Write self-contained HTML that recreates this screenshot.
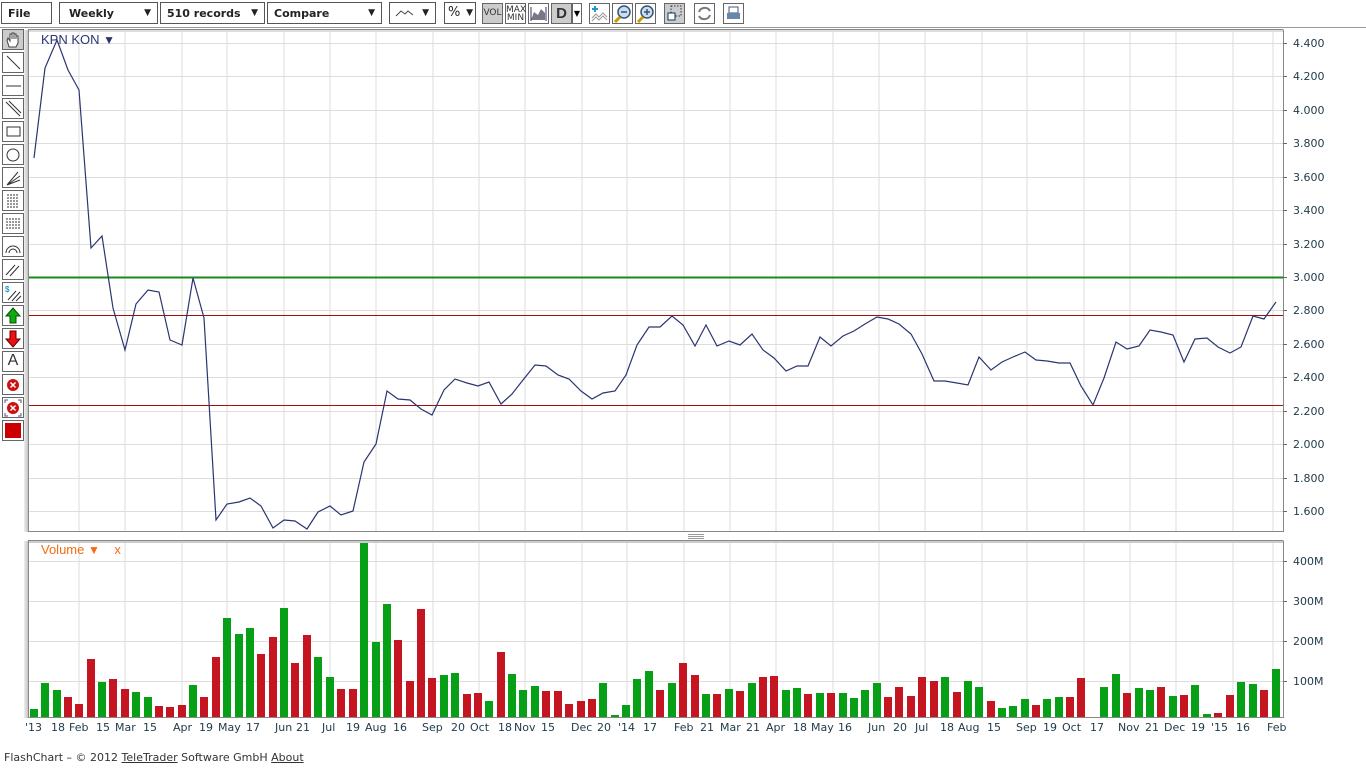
<!DOCTYPE html>
<html><head><meta charset="utf-8"><style>
*{margin:0;padding:0;box-sizing:border-box}
body{width:1366px;height:768px;background:#fff;font-family:"DejaVu Sans",sans-serif;position:relative;overflow:hidden}
.dd{position:absolute;top:2px;height:22px;border:1px solid #555;background:#fff;font:bold 11px "DejaVu Sans",sans-serif;color:#222;padding:4px 6px;}
.dd .a{position:absolute;right:6px;top:5px;font-size:9px}
.tb{position:absolute;top:3px;width:21px;height:21px;border:1px solid #666;background:#fff;font:9px "DejaVu Sans",sans-serif;text-align:center;line-height:19px;color:#333}
.lb{position:absolute;left:2px;width:22px;height:21px;border:1px solid #666;background:#fff;text-align:center}
.ax{position:absolute;left:1293px;font:11px "DejaVu Sans",sans-serif;color:#1e3a48}
.xl span{position:absolute;top:721px;font:11px "DejaVu Sans",sans-serif;color:#1e3a48;white-space:pre}
</style></head><body>
<div class="dd" style="left:1px;width:51px">File</div>
<div class="dd" style="left:59px;width:99px;padding-left:9px">Weekly<span class="a">▼</span></div>
<div class="dd" style="left:160px;width:105px">510 records<span class="a">▼</span></div>
<div class="dd" style="left:267px;width:115px">Compare<span class="a">▼</span></div>
<div class="dd" style="left:389px;width:47px"><svg width="20" height="10" style="position:absolute;left:5px;top:5px"><path d="M1 8 L6 3 L10 6 L13 3 L18 7" fill="none" stroke="#444"/></svg><span class="a">▼</span></div>
<div class="dd" style="left:444px;width:32px;font-weight:normal;font-size:13px;padding:2px 3px">%<span class="a" style="right:2px">▼</span></div>
<div class="tb" style="left:482px;background:#ccc">VOL</div>
<div class="tb" style="left:505px;line-height:8px;padding-top:2px">MAX<br>MIN</div>
<div class="tb" style="left:528px"><svg width="19" height="19"><path d="M2 16 L5 8 L9 11 L12 5 L16 9 L16 16Z" fill="#778"/><path d="M2 3V17M17 3V17" stroke="#336"/></svg></div>
<div class="tb" style="left:551px;background:#ccc;font:bold 15px sans-serif;line-height:19px">D</div>
<div style="position:absolute;left:572px;top:3px;width:10px;height:21px;border:1px solid #666;font-size:8px;line-height:19px;text-align:center">▼</div>
<div class="tb" style="left:589px"><svg width="19" height="19"><path d="M5 2v6M2 5h6" stroke="#29c" stroke-width="2"/><path d="M2 14L6 10L9 13L13 9L17 13M2 17L6 13L9 16L13 12L17 16" fill="none" stroke="#999"/></svg></div>
<div class="tb" style="left:612px"><svg width="19" height="19"><circle cx="11" cy="8" r="6" fill="#cde" stroke="#357" stroke-width="1.5"/><path d="M7 13L2 18" stroke="#c90" stroke-width="3"/><path d="M8 8h6" stroke="#357" stroke-width="1.5"/></svg></div>
<div class="tb" style="left:635px"><svg width="19" height="19"><circle cx="11" cy="8" r="6" fill="#cde" stroke="#357" stroke-width="1.5"/><path d="M7 13L2 18" stroke="#c90" stroke-width="3"/><path d="M8 8h6M11 5v6" stroke="#357" stroke-width="1.5"/></svg></div>
<div class="tb" style="left:664px;background:#ccc"><svg width="19" height="19"><rect x="6" y="2" width="10" height="10" fill="none" stroke="#333" stroke-dasharray="1.5 1.5"/><rect x="3" y="9" width="7" height="7" fill="#fff" stroke="#135"/></svg></div>
<div class="tb" style="left:694px"><svg width="19" height="19"><path d="M4 8 A6 6 0 0 1 15 7 M15 11 A6 6 0 0 1 4 12" fill="none" stroke="#778" stroke-width="2"/></svg></div>
<div class="tb" style="left:723px"><svg width="19" height="19"><rect x="5" y="3" width="9" height="6" fill="#fff" stroke="#457"/><rect x="3" y="9" width="13" height="6" fill="#68a"/></svg></div>
<div style="position:absolute;left:0;top:27px;width:1366px;height:1px;background:#999"></div>

<!-- left toolbar -->
<div class="lb" style="top:29px;background:#ccc"><svg width="20" height="19"><path d="M6 17 L4 10 L5 8 L7 11 L7 4 L9 4 L9 9 L9 3 L11 3 L11 9 L11 4 L13 4 L13 9 L13 6 L15 6 L15 13 L13 17Z" fill="#fff" stroke="#444"/></svg></div>
<div class="lb" style="top:52px"><svg width="20" height="19"><path d="M4 3L17 16" stroke="#333"/></svg></div>
<div class="lb" style="top:75px"><svg width="20" height="19"><path d="M3 10H18" stroke="#333"/></svg></div>
<div class="lb" style="top:98px"><svg width="20" height="19"><path d="M3 3L17 17M6 2L18 14" stroke="#333"/></svg></div>
<div class="lb" style="top:121px"><svg width="20" height="19"><rect x="4" y="5" width="13" height="9" fill="none" stroke="#333"/></svg></div>
<div class="lb" style="top:144px"><svg width="20" height="19"><circle cx="10" cy="10" r="6" fill="none" stroke="#333"/></svg></div>
<div class="lb" style="top:167px"><svg width="20" height="19"><path d="M4 17L15 4M4 17L17 8M4 17L17 12" stroke="#333"/></svg></div>
<div class="lb" style="top:190px"><svg width="20" height="19"><path d="M5 3V17M8 3V17M11 3V17M14 3V17" stroke="#333" stroke-dasharray="2 1"/></svg></div>
<div class="lb" style="top:213px"><svg width="20" height="19"><path d="M3 5H17M3 8H17M3 11H17M3 14H17" stroke="#333" stroke-dasharray="2 1"/></svg></div>
<div class="lb" style="top:236px"><svg width="20" height="19"><path d="M3 16A7 7 0 0 1 17 16M6 16A4 4 0 0 1 14 16" fill="none" stroke="#333"/></svg></div>
<div class="lb" style="top:259px"><svg width="20" height="19"><path d="M3 15L12 5M7 16L16 6" stroke="#333"/></svg></div>
<div class="lb" style="top:282px"><svg width="20" height="19"><text x="2" y="9" font-size="8" font-weight="bold" fill="#29c" font-family="Liberation Sans">$</text><path d="M5 17L13 8M9 18L17 9M13 18L18 13" stroke="#333"/></svg></div>
<div class="lb" style="top:305px"><svg width="20" height="19"><path d="M10 2L17 10H13V17H7V10H3Z" fill="#1a1" stroke="#050"/></svg></div>
<div class="lb" style="top:328px"><svg width="20" height="19"><path d="M10 18L17 10H13V2H7V10H3Z" fill="#e11" stroke="#600"/></svg></div>
<div class="lb" style="top:351px;font:16px 'Liberation Sans',sans-serif;color:#333">A</div>
<div class="lb" style="top:374px"><svg width="20" height="19"><circle cx="10" cy="10" r="6" fill="#c11"/><path d="M7.5 7.5L12.5 12.5M12.5 7.5L7.5 12.5" stroke="#fff" stroke-width="1.5"/></svg></div>
<div class="lb" style="top:397px"><svg width="20" height="19"><circle cx="10" cy="10" r="6" fill="#c11"/><path d="M7.5 7.5L12.5 12.5M12.5 7.5L7.5 12.5" stroke="#fff" stroke-width="1.5"/><path d="M2 5V2H5M15 2H18V5M2 15V18H5M15 18H18V15" fill="none" stroke="#557"/></svg></div>
<div class="lb" style="top:420px;padding:2px"><div style="width:16px;height:15px;background:#c00"></div></div>

<svg width="1366" height="768" style="position:absolute;left:0;top:0">
<defs><linearGradient id="sh" x1="0" x2="1"><stop offset="0" stop-color="#eee"/><stop offset="1" stop-color="#bbb"/></linearGradient></defs>
<g stroke="#ddd" stroke-width="1">
<path d="M79 30V531M125 30V531M182 30V531M227 30V531M284 30V531M330 30V531M376 30V531M433 30V531M479 30V531M525 30V531M582 30V531M627 30V531M684 30V531M730 30V531M776 30V531M833 30V531M879 30V531M925 30V531M982 30V531M1027 30V531M1084 30V531M1130 30V531M1176 30V531M1233 30V531M1273 30V531"/>
<path d="M79 541V717M125 541V717M182 541V717M227 541V717M284 541V717M330 541V717M376 541V717M433 541V717M479 541V717M525 541V717M582 541V717M627 541V717M684 541V717M730 541V717M776 541V717M833 541V717M879 541V717M925 541V717M982 541V717M1027 541V717M1084 541V717M1130 541V717M1176 541V717M1233 541V717M1273 541V717"/>
<path d="M28 43.5H1283M28 76.5H1283M28 110.5H1283M28 143.5H1283M28 177.5H1283M28 210.5H1283M28 244.5H1283M28 277.5H1283M28 310.5H1283M28 344.5H1283M28 377.5H1283M28 411.5H1283M28 444.5H1283M28 478.5H1283M28 511.5H1283"/>
<path d="M28 561.5H1283M28 601.5H1283M28 641.5H1283M28 681.5H1283"/>
</g>
<rect x="24" y="30" width="5" height="502" fill="url(#sh)"/>
<rect x="24" y="541" width="5" height="177" fill="url(#sh)"/>
<rect x="28" y="29" width="1255" height="3" fill="#ddd"/>
<rect x="28" y="540" width="1255" height="3" fill="#ccc"/>
<path d="M28.5 30V531.5H1283.5V30M28.5 541V717.5H1283.5V541" fill="none" stroke="#888"/>
<path d="M28 29.5H1283.5M28 540.5H1283.5" stroke="#888"/>
<path d="M688 534.5h16M688 536.5h16M688 538.5h16" stroke="#999"/>
<g stroke="#666"><path d="M1283 43.5h4M1283 76.5h4M1283 110.5h4M1283 143.5h4M1283 177.5h4M1283 210.5h4M1283 244.5h4M1283 277.5h4M1283 310.5h4M1283 344.5h4M1283 377.5h4M1283 411.5h4M1283 444.5h4M1283 478.5h4M1283 511.5h4M1283 561.5h4M1283 601.5h4M1283 641.5h4M1283 681.5h4"/></g>
<path d="M29 277.5H1283" stroke="#1a8a1a" stroke-width="2"/>
<path d="M29 315.5H1283M29 405.5H1283" stroke="#a01010" stroke-width="1"/>
<polyline fill="none" stroke="#2b3570" stroke-width="1.2" points="34,158 45,68 57,40 68,70 79,90 91,248 102,236 113,308 125,350 136,304 148,290 159,292 170,340 182,345 193,278 204,318 216,520 227,504 239,502 250,498 261,506 273,528 284,520 295,521 307,529 318,512 330,506 341,515 353,511 364,462 376,444 387,391 398,399 410,400 421,409 432,415 444,390 455,379 467,383 478,386 489,382 501,404 512,394 523,380 535,365 546,366 558,375 569,379 581,391 592,399 603,393 615,391 626,375 637,345 649,327 660,327 672,316 683,325 695,346 706,325 717,346 729,341 740,345 752,334 763,350 774,358 786,371 797,366 808,366 820,337 831,346 843,336 854,331 865,324 877,317 888,319 899,324 911,334 922,354 934,381 945,381 957,383 968,385 979,357 991,370 1002,362 1013,357 1025,352 1036,360 1047,361 1059,363 1070,363 1081,386 1093,405 1104,378 1116,342 1127,349 1139,346 1150,330 1161,332 1173,335 1184,362 1195,339 1207,338 1218,347 1230,353 1241,347 1253,316 1264,319 1276,302"/>
<path fill="#079f16" d="M30 709h8V717h-8ZM41 683h8V717h-8ZM53 690h8V717h-8ZM98 682h8V717h-8ZM132 692h8V717h-8ZM144 697h8V717h-8ZM189 685h8V717h-8ZM223 618h8V717h-8ZM235 634h8V717h-8ZM246 628h8V717h-8ZM280 608h8V717h-8ZM314 657h8V717h-8ZM326 677h8V717h-8ZM360 543h8V717h-8ZM372 642h8V717h-8ZM383 604h8V717h-8ZM440 675h8V717h-8ZM451 673h8V717h-8ZM485 701h8V717h-8ZM508 674h8V717h-8ZM519 690h8V717h-8ZM531 686h8V717h-8ZM599 683h8V717h-8ZM611 715h8V717h-8ZM622 705h8V717h-8ZM633 679h8V717h-8ZM645 671h8V717h-8ZM668 683h8V717h-8ZM702 694h8V717h-8ZM725 689h8V717h-8ZM748 683h8V717h-8ZM782 690h8V717h-8ZM793 688h8V717h-8ZM816 693h8V717h-8ZM839 693h8V717h-8ZM850 698h8V717h-8ZM861 690h8V717h-8ZM873 683h8V717h-8ZM941 677h8V717h-8ZM964 681h8V717h-8ZM975 687h8V717h-8ZM998 708h8V717h-8ZM1009 706h8V717h-8ZM1021 699h8V717h-8ZM1043 699h8V717h-8ZM1055 697h8V717h-8ZM1100 687h8V717h-8ZM1112 674h8V717h-8ZM1135 688h8V717h-8ZM1146 690h8V717h-8ZM1169 696h8V717h-8ZM1191 685h8V717h-8ZM1203 714h8V717h-8ZM1237 682h8V717h-8ZM1249 684h8V717h-8ZM1272 669h8V717h-8Z"/>
<path fill="#c41520" d="M64 697h8V717h-8ZM75 704h8V717h-8ZM87 659h8V717h-8ZM109 679h8V717h-8ZM121 689h8V717h-8ZM155 706h8V717h-8ZM166 707h8V717h-8ZM178 705h8V717h-8ZM200 697h8V717h-8ZM212 657h8V717h-8ZM257 654h8V717h-8ZM269 637h8V717h-8ZM291 663h8V717h-8ZM303 635h8V717h-8ZM337 689h8V717h-8ZM349 689h8V717h-8ZM394 640h8V717h-8ZM406 681h8V717h-8ZM417 609h8V717h-8ZM428 678h8V717h-8ZM463 694h8V717h-8ZM474 693h8V717h-8ZM497 652h8V717h-8ZM542 691h8V717h-8ZM554 691h8V717h-8ZM565 704h8V717h-8ZM577 701h8V717h-8ZM588 699h8V717h-8ZM656 690h8V717h-8ZM679 663h8V717h-8ZM691 675h8V717h-8ZM713 694h8V717h-8ZM736 691h8V717h-8ZM759 677h8V717h-8ZM770 676h8V717h-8ZM804 694h8V717h-8ZM827 693h8V717h-8ZM884 697h8V717h-8ZM895 687h8V717h-8ZM907 696h8V717h-8ZM918 677h8V717h-8ZM930 681h8V717h-8ZM953 692h8V717h-8ZM987 701h8V717h-8ZM1032 705h8V717h-8ZM1066 697h8V717h-8ZM1077 678h8V717h-8ZM1123 693h8V717h-8ZM1157 687h8V717h-8ZM1180 695h8V717h-8ZM1214 713h8V717h-8ZM1226 695h8V717h-8ZM1260 690h8V717h-8Z"/>
</svg>
<div style="position:absolute;left:41px;top:32px;font:13px 'Liberation Sans',sans-serif;color:#2b3570">KPN KON <span style="font-size:12px">▼</span></div>
<div style="position:absolute;left:41px;top:542px;font:13px 'Liberation Sans',sans-serif;color:#f36c12">Volume <span style="font-size:12px">▼</span> &nbsp;&nbsp; x</div>
<div class="ax" style="top:37px">4.400</div><div class="ax" style="top:70px">4.200</div><div class="ax" style="top:104px">4.000</div><div class="ax" style="top:137px">3.800</div><div class="ax" style="top:171px">3.600</div><div class="ax" style="top:204px">3.400</div><div class="ax" style="top:238px">3.200</div><div class="ax" style="top:271px">3.000</div><div class="ax" style="top:304px">2.800</div><div class="ax" style="top:338px">2.600</div><div class="ax" style="top:371px">2.400</div><div class="ax" style="top:405px">2.200</div><div class="ax" style="top:438px">2.000</div><div class="ax" style="top:472px">1.800</div><div class="ax" style="top:505px">1.600</div>
<div class="ax" style="top:555px">400M</div><div class="ax" style="top:595px">300M</div><div class="ax" style="top:635px">200M</div><div class="ax" style="top:675px">100M</div>
<div class="xl">
<span style="left:25px">'13</span><span style="left:51px">18</span><span style="left:69px">Feb</span><span style="left:96px">15</span><span style="left:115px">Mar</span><span style="left:143px">15</span><span style="left:173px">Apr</span><span style="left:199px">19</span><span style="left:218px">May</span><span style="left:246px">17</span><span style="left:275px">Jun</span><span style="left:296px">21</span><span style="left:322px">Jul</span><span style="left:346px">19</span><span style="left:365px">Aug</span><span style="left:393px">16</span><span style="left:422px">Sep</span><span style="left:451px">20</span><span style="left:470px">Oct</span><span style="left:498px">18</span><span style="left:514px">Nov</span><span style="left:541px">15</span><span style="left:571px">Dec</span><span style="left:597px">20</span><span style="left:618px">'14</span><span style="left:643px">17</span><span style="left:674px">Feb</span><span style="left:700px">21</span><span style="left:720px">Mar</span><span style="left:746px">21</span><span style="left:766px">Apr</span><span style="left:793px">18</span><span style="left:811px">May</span><span style="left:838px">16</span><span style="left:868px">Jun</span><span style="left:893px">20</span><span style="left:915px">Jul</span><span style="left:940px">18</span><span style="left:958px">Aug</span><span style="left:987px">15</span><span style="left:1016px">Sep</span><span style="left:1043px">19</span><span style="left:1062px">Oct</span><span style="left:1090px">17</span><span style="left:1118px">Nov</span><span style="left:1145px">21</span><span style="left:1164px">Dec</span><span style="left:1191px">19</span><span style="left:1211px">'15</span><span style="left:1236px">16</span><span style="left:1267px">Feb</span>
</div>
<div style="position:absolute;left:4px;top:751px;font:11px 'DejaVu Sans',sans-serif;color:#333;white-space:pre">FlashChart – © 2012 <u>TeleTrader</u> Software GmbH <u>About</u></div>
</body></html>
